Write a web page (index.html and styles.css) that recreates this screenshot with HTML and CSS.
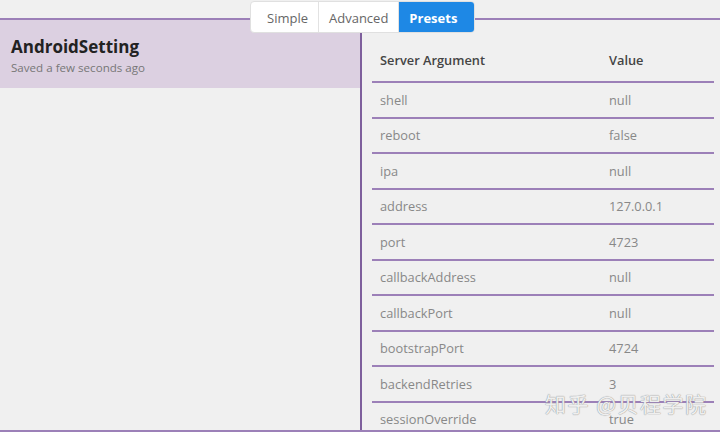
FILE: index.html
```html
<!DOCTYPE html>
<html>
<head>
<meta charset="utf-8">
<link rel="stylesheet" href="styles.css">
</head>
<body>
<div class="page">
  <div class="tabs">
    <div class="tab">Simple</div>
    <div class="tab">Advanced</div>
    <div class="tab active">Presets</div>
  </div>
  <div class="main">
    <div class="left">
      <div class="preset">
        <div class="preset-name">AndroidSetting</div>
        <div class="preset-time">Saved a few seconds ago</div>
      </div>
    </div>
    <div class="right">
      <table class="args">
        <thead>
          <tr><th>Server Argument</th><th>Value</th></tr>
        </thead>
        <tbody>
          <tr><td>shell</td><td>null</td></tr>
          <tr><td>reboot</td><td>false</td></tr>
          <tr><td>ipa</td><td>null</td></tr>
          <tr><td>address</td><td>127.0.0.1</td></tr>
          <tr><td>port</td><td>4723</td></tr>
          <tr><td>callbackAddress</td><td>null</td></tr>
          <tr><td>callbackPort</td><td>null</td></tr>
          <tr><td>bootstrapPort</td><td>4724</td></tr>
          <tr><td>backendRetries</td><td>3</td></tr>
          <tr><td>sessionOverride</td><td>true</td></tr>
        </tbody>
      </table>
    </div>
  </div>
  <div class="watermark">知乎 @贝程学院</div>
</div>
</body>
</html>
```
FILE: styles.css
```css
html, body {
  margin: 0;
  padding: 0;
  background: #f0f0f0;
}
body {
  font-family: "Open Sans", "Noto Sans", sans-serif;
  color: #333;
  width: 720px;
  height: 432px;
  overflow: hidden;
}
.page {
  position: relative;
  width: 720px;
  height: 432px;
  padding-top: 18px;
  box-sizing: border-box;
}
.tabs {
  position: absolute;
  top: 1px;
  left: 250px;
  display: flex;
  height: 32px;
  background: #fff;
  border: 1px solid #e0e0e0;
  border-radius: 4px;
  overflow: hidden;
  box-sizing: border-box;
  z-index: 2;
}
.tab {
  display: flex;
  align-items: center;
  padding: 2px 10px 0;
  font-size: 13px;
  color: #666;
  border-right: 1px solid #e2e2e2;
}
.tab:first-child {
  padding: 2px 10px 0 16px;
}
.tab.active {
  background: #1e88e5;
  color: #fff;
  font-weight: 700;
  border-right: none;
  padding: 2px 17px 0 10px;
}
.main {
  display: flex;
  height: 414px;
  border-top: 2px solid #9c80b8;
  border-bottom: 2px solid #9c80b8;
  box-sizing: border-box;
}
.left {
  width: 362px;
  border-right: 2px solid #7e5f9c;
  box-sizing: border-box;
  flex: none;
}
.preset {
  background: #dcd0e1;
  height: 68px;
  padding: 16px 11px 0;
  box-sizing: border-box;
}
.preset-name {
  font-size: 17px;
  font-weight: 700;
  color: #222;
  line-height: 22px;
}
.preset-time {
  font-size: 11.6px;
  color: #777;
  line-height: 15px;
  margin-top: 2px;
}
.right {
  flex: 1;
  padding: 24px 6px 0 10px;
}
.args {
  width: 100%;
  border-collapse: collapse;
  font-size: 12.8px;
}
.args th {
  text-align: left;
  font-weight: 600;
  color: #444;
  height: 31px;
  padding: 0 8px 6px;
  border-bottom: 2px solid #9c80b8;
}
.args th:first-child, .args td:first-child {
  width: 213px;
}
.args td {
  color: #888;
  height: 33.5px;
  padding: 0 8px;
  border-bottom: 2px solid #9c80b8;
}
.watermark {
  position: absolute;
  left: 545px;
  top: 388px;
  font-family: "Noto Sans CJK SC", sans-serif;
  font-size: 21px;
  color: rgba(255, 255, 255, 0.85);
  text-shadow: 0 0 1px #999, 0 0 1px #999;
  letter-spacing: 1.5px;
  z-index: 3;
}
```
